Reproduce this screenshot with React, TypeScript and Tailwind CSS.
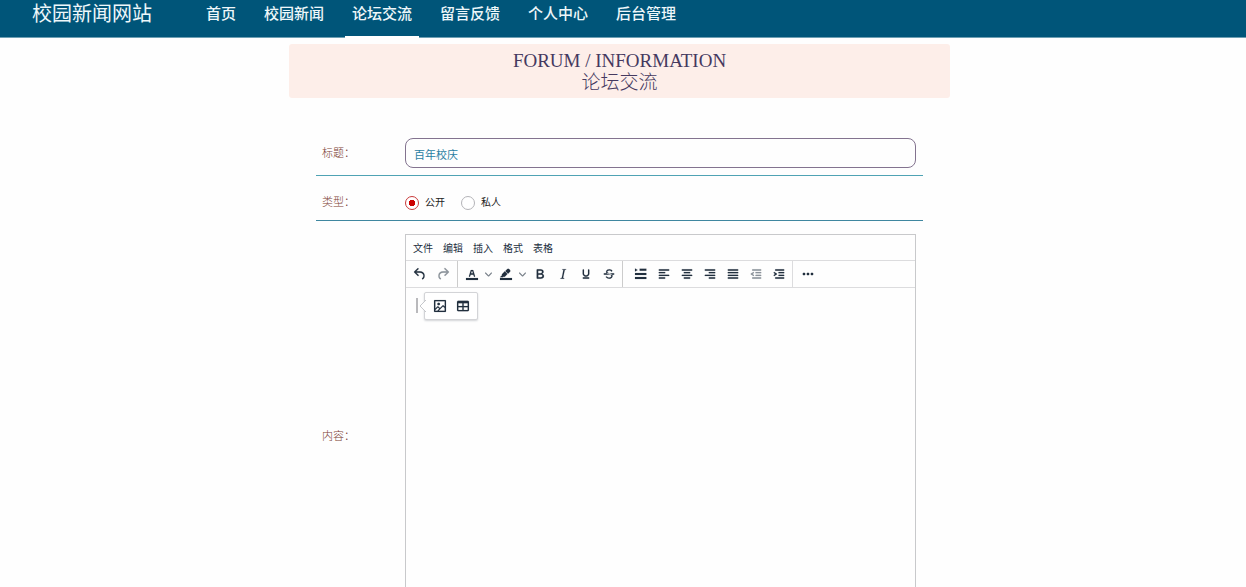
import { useState, type ReactNode } from "react";

const NAV = ["首页", "校园新闻", "论坛交流", "留言反馈", "个人中心", "后台管理"];
const MENUS = ["文件", "编辑", "插入", "格式", "表格"];

const line = (x: number, y: number, end: number) =>
  `M${x} ${y}H${end}a1 1 0 0 1 0 2H${x}a1 1 0 0 1 0-2z`;

const ICONS = {
  undo: "M6.4 8H12c3.7 0 6.2 2 6.8 5.1.6 2.7-.4 5.6-2.3 6.8a1 1 0 0 1-1-1.8c1.1-.6 1.8-2.7 1.4-4.6-.5-2.1-2.1-3.5-4.9-3.5H6.4l3.3 3.3a1 1 0 1 1-1.4 1.4l-5-5a1 1 0 0 1 0-1.4l5-5a1 1 0 0 1 1.4 1.4L6.4 8z",
  redo: "M17.6 10H12c-2.8 0-4.4 1.4-4.9 3.5-.4 2 .3 4 1.4 4.6a1 1 0 1 1-1 1.8c-2-1.2-2.9-4.1-2.3-6.8.6-3 3-5.1 6.8-5.1h5.6l-3.3-3.3a1 1 0 1 1 1.4-1.4l5 5a1 1 0 0 1 0 1.4l-5 5a1 1 0 0 1-1.4-1.4l3.3-3.3z",
  color:
    "M3 18h18v3H3zM8.7 16h-.8a.5.5 0 0 1-.5-.6l2.7-9c.1-.3.3-.4.5-.4h2.8c.2 0 .4.1.5.4l2.7 9a.5.5 0 0 1-.5.6h-.8a.5.5 0 0 1-.4-.4l-.7-2.2c0-.3-.3-.4-.5-.4h-3.4c-.2 0-.4.1-.5.4l-.7 2.2c0 .3-.2.4-.4.4zm2.6-7.6l-.6 2a.5.5 0 0 0 .5.6h1.6a.5.5 0 0 0 .5-.6l-.6-2c0-.3-.3-.4-.5-.4h-.4c-.2 0-.4.1-.5.4z",
  highlight:
    "M3 18h18v3H3zM7.7 16.7H3l3.3-3.3-.7-.8L10.2 8l4 4.1-4 4.2c-.2.2-.6.2-.8 0l-.6-.7-1.1 1.1zm5-7.5L11 7.4l3-2.9a2 2 0 0 1 2.6 0L18 6c.7.7.7 2 0 2.7l-2.9 2.9-1.8-1.8-.5-.6z",
  bold: "M7.8 19c-.3 0-.5 0-.6-.2l-.2-.5V5.7c0-.2 0-.4.2-.5l.6-.2h5c1.5 0 2.7.3 3.5 1 .7.6 1.1 1.4 1.1 2.5a3 3 0 0 1-.6 1.9c-.4.6-1 1-1.6 1.2.4.1.9.3 1.3.6s.8.7 1 1.2c.4.4.5 1 .5 1.6 0 1.3-.4 2.3-1.3 3-.8.7-2.1 1-3.8 1H7.8zm5-8.3c.6 0 1.2-.1 1.6-.5.4-.3.6-.7.6-1.3 0-1.1-.8-1.7-2.3-1.7H9.3v3.5h3.4zm.5 6c.7 0 1.3-.1 1.7-.4.4-.4.6-.9.6-1.5s-.2-1-.7-1.4c-.4-.3-1-.4-2-.4H9.4v3.8h4z",
  italic:
    "M16.7 4.7l-.1.9h-.3c-.6 0-1 0-1.4.3-.3.3-.4.6-.5 1.1l-2.1 9.8v.6c0 .5.4.8 1.4.8h.2l-.2.8H8l.2-.8h.2c1.1 0 1.8-.5 2-1.5l2-9.8.1-.5c0-.6-.4-.8-1.4-.8h-.3l.2-.9h5.8z",
  underline:
    "M16 5c.6 0 1 .4 1 1v5.5a4 4 0 0 1-.4 1.8l-1 1.4a5.3 5.3 0 0 1-5.5 1 5 5 0 0 1-1.6-1c-.5-.4-.8-.9-1.1-1.4a4 4 0 0 1-.4-1.8V6c0-.6.4-1 1-1s1 .4 1 1v5.5c0 .3 0 .6.2 1l.6.7a3.3 3.3 0 0 0 2.2.8 3.4 3.4 0 0 0 2.2-.8c.3-.2.4-.5.6-.8l.2-.9V6c0-.6.4-1 1-1zM8 17h8c.6 0 1 .4 1 1s-.4 1-1 1H8a1 1 0 0 1 0-2z",
  strike:
    "M15.6 8.5c-.5-.7-1-1.1-1.3-1.3-.6-.4-1.3-.6-2-.6-2.7 0-2.8 1.7-2.8 2.1 0 1.6 1.8 2 3.2 2.3 4.4.9 4.6 2.8 4.6 3.9 0 1.4-.7 4.1-5 4.1A6.2 6.2 0 0 1 7 16.4l1.5-1.1c.4.6 1.6 2 3.7 2 1.6 0 2.5-.4 3-1.2.4-.8.3-2-.8-2.6-.7-.4-1.6-.7-2.9-1-1-.2-3.9-.8-3.9-3.6C7.6 6 10.3 5 12.4 5c2.9 0 4.2 1.6 4.7 2.4l-1.5 1.1zM5 11h14a1 1 0 0 1 0 2H5a1 1 0 0 1 0-2z",
  firstLine: "M3 3.6l4 2.4-4 2.4zM10 4h10v3H10zM3 10.5h17v3H3zM3 16.5h17v3H3z",
  left: line(5, 5, 19) + line(5, 9, 13) + line(5, 13, 19) + line(5, 17, 13),
  center: line(5, 5, 19) + line(8, 9, 16) + line(5, 13, 19) + line(8, 17, 16),
  right: line(5, 5, 19) + line(11, 9, 19) + line(5, 13, 19) + line(11, 17, 19),
  justify: line(5, 5, 19) + line(5, 9, 19) + line(5, 13, 19) + line(5, 17, 19),
  outdent:
    line(7, 5, 19) + line(12, 9, 19) + line(12, 13, 19) + line(7, 17, 19) +
    "M8.6 13.2a1 1 0 0 1-1.2 1.6l-3-2a1 1 0 0 1 0-1.6l3-2a1 1 0 0 1 1.2 1.6L6.8 12l1.8 1.2z",
  indent:
    line(7, 5, 19) + line(12, 9, 19) + line(12, 13, 19) + line(7, 17, 19) +
    "M4.4 13.2L6.2 12l-1.8-1.2a1 1 0 0 1 1.2-1.6l3 2a1 1 0 0 1 0 1.6l-3 2a1 1 0 0 1-1.2-1.6z",
  more: "M6 10a2 2 0 1 0 0 4 2 2 0 0 0 0-4zm12 0a2 2 0 1 0 0 4 2 2 0 0 0 0-4zm-6 0a2 2 0 1 0 0 4 2 2 0 0 0 0-4z",
  image:
    "M5 15.7l3.3-3.2c.3-.3.7-.3 1 0L12 15l4.1-4c.3-.4.8-.4 1 0l2 1.9V5H5v10.7zM5 18v1h3l2.8-2.9-2-2L5 17.9zm14-3l-2.5-2.4-6.4 6.5H19v-4zM4 3h16c.6 0 1 .4 1 1v16c0 .6-.4 1-1 1H4a1 1 0 0 1-1-1V4c0-.6.4-1 1-1zm6 8a2 2 0 1 0 0-4 2 2 0 0 0 0 4z",
  table:
    "M19 4a2 2 0 0 1 2 2v12a2 2 0 0 1-2 2H5a2 2 0 0 1-2-2V6c0-1.1.9-2 2-2h14zM5 14v4h6v-4H5zm14 0h-6v4h6v-4zm0-6h-6v4h6V8zM5 12h6V8H5v4z",
};

type IconName = keyof typeof ICONS;

function Tool({ icon, label, disabled = false }: { icon: IconName; label: string; disabled?: boolean }) {
  return (
    <button
      type="button"
      aria-label={label}
      disabled={disabled}
      className="flex size-[23px] shrink-0 items-center justify-center text-[#222f3e] disabled:text-[#222f3e]/50"
    >
      <svg
        viewBox="0 0 24 24"
        className="size-4"
        fill="currentColor"
        fillRule="evenodd"
        stroke="currentColor"
        strokeWidth="0.2"
        aria-hidden="true"
      >
        <path d={ICONS[icon]} />
      </svg>
    </button>
  );
}

function Chevron({ label }: { label: string }) {
  return (
    <button type="button" aria-label={label} className="flex h-[23px] w-[11px] shrink-0 items-center justify-center text-[#222f3e]/60">
      <svg viewBox="0 0 10 10" className="size-[7px]" fill="currentColor" aria-hidden="true">
        <path d="M8.7 2.2c.3-.3.8-.3 1 0 .4.4.4.9 0 1.2L5.7 7.8c-.3.3-.9.3-1.2 0L.2 3.4a.8.8 0 0 1 0-1.2c.3-.3.8-.3 1.1 0L5 6l3.7-3.8z" />
      </svg>
    </button>
  );
}

function Row({ label, htmlFor, className, children }: { label: string; htmlFor: string; className: string; children: ReactNode }) {
  return (
    <div className={`flex items-center pr-[7px] pl-1.5 ${className}`}>
      <label id={`${htmlFor}-label`} htmlFor={htmlFor} className="w-[83px] shrink-0 text-[11px] leading-4 font-light text-[#7c4034]">
        {label}
      </label>
      <div className="min-w-0 flex-1">{children}</div>
    </div>
  );
}

function Editor() {
  return (
    <div className="h-[404px] border border-[#c8c9cb] bg-[#fefefe]">
      <div role="menubar" className="flex h-[25px] items-center pt-0.5 pl-0.5">
        {MENUS.map((m) => (
          <button key={m} type="button" role="menuitem" className="px-[5px] text-[10px] leading-4 text-[#222f3e]">
            {m}
          </button>
        ))}
      </div>
      <div role="toolbar" className="flex h-7 border-y border-[#dcdcde]">
        <div className="flex items-center border-r border-[#cccccc] pr-[3px] pl-0.5">
          <Tool icon="undo" label="撤销" />
          <Tool icon="redo" label="重做" disabled />
        </div>
        <div className="flex items-center border-r border-[#cccccc] px-0.5">
          <Tool icon="color" label="文字颜色" />
          <Chevron label="选择文字颜色" />
          <Tool icon="highlight" label="背景颜色" />
          <Chevron label="选择背景颜色" />
          <Tool icon="bold" label="粗体" />
          <Tool icon="italic" label="斜体" />
          <Tool icon="underline" label="下划线" />
          <Tool icon="strike" label="删除线" />
        </div>
        <div className="flex items-center border-r border-[#dcdcde] pr-0.5 pl-1.5">
          <Tool icon="firstLine" label="首行缩进" />
          <Tool icon="left" label="左对齐" />
          <Tool icon="center" label="居中" />
          <Tool icon="right" label="右对齐" />
          <Tool icon="justify" label="两端对齐" />
          <Tool icon="outdent" label="减少缩进" disabled />
          <Tool icon="indent" label="增加缩进" />
        </div>
        <div className="flex items-center pl-[3px]">
          <Tool icon="more" label="更多" />
        </div>
      </div>
      <div id="content" role="textbox" aria-multiline="true" aria-labelledby="content-label" tabIndex={0} className="relative px-2.5 py-2.5 outline-none">
        <div className="h-[15px] w-0.5 bg-[#b9b9bc]" />
        <div className="absolute top-1 left-[18px] flex h-7 items-center rounded-[2px] border border-[#d3d4d7] bg-white px-[3px] shadow-[0_1px_2px_rgba(34,47,62,0.2)]">
          <svg viewBox="0 0 7 12" className="absolute top-[7px] -left-1.5 h-3 w-[7px]" aria-hidden="true">
            <path d="M7 0L1 6l6 6" fill="#fff" stroke="#c6c8cc" />
          </svg>
          <Tool icon="image" label="插入图片" />
          <Tool icon="table" label="插入表格" />
        </div>
      </div>
    </div>
  );
}

export default function App() {
  const [title, setTitle] = useState("百年校庆");
  const [kind, setKind] = useState("公开");

  return (
    <div className="h-screen overflow-hidden bg-[#fefefe] font-['Liberation_Sans','Noto_Sans_CJK_SC',sans-serif]">
      <header className="flex h-[38px] items-start border-b border-[#6d9fb3] bg-[#005579] pl-8 text-[#eef7fa]">
        <a href="#" className="w-[167px] shrink-0 text-xl leading-7">校园新闻网站</a>
        <nav className="flex gap-3.5 self-stretch">
          {NAV.map((n) => (
            <a
              key={n}
              href="#"
              className={`-mb-px border-b-2 px-[7px] text-[15px] leading-7 font-medium whitespace-nowrap ${n === "论坛交流" ? "border-white" : "border-transparent"}`}
            >
              {n}
            </a>
          ))}
        </nav>
      </header>

      <div className="pt-1.5 pr-[7px]">
        <main className="mx-auto max-w-[661px]">
          <div className="rounded-[3px] bg-[#fdeee9] pt-1.5 pb-1 text-center font-['Liberation_Serif','Noto_Sans_CJK_SC',serif] leading-[22px] text-[#45395f]">
            <h1 className="text-[19px]">FORUM / INFORMATION</h1>
            <h2 className="text-[19px] font-light">论坛交流</h2>
          </div>

          <form className="px-[27px] pt-[33px]" onSubmit={(e) => e.preventDefault()}>
            <Row label="标题：" htmlFor="title" className="h-[45px] border-b border-[#4fa3b4]">
              <input
                id="title"
                type="text"
                value={title}
                onChange={(e) => setTitle(e.target.value)}
                className="block h-[30px] w-full rounded-lg border border-[#83738f] bg-transparent px-2 pt-0.5 text-[11px] text-[#2a7fa3] outline-none"
              />
            </Row>
            <Row label="类型：" htmlFor="kind-0" className="h-[45px] border-b border-[#3f87a0] pt-[7px]">
              <div className="flex gap-4 pt-0.5">
                {["公开", "私人"].map((k, i) => (
                  <label key={k} className="flex items-center gap-1.5 text-[10px] leading-4 text-[#222222]">
                    <input
                      id={`kind-${i}`}
                      type="radio"
                      name="kind"
                      checked={kind === k}
                      onChange={() => setKind(k)}
                      className="size-3.5 appearance-none rounded-full border border-[#b4b4b8] bg-white checked:border-[#c83a3a] checked:bg-[radial-gradient(circle,#cc0000_3px,transparent_3px)]"
                    />
                    {k}
                  </label>
                ))}
              </div>
            </Row>
            <Row label="内容：" htmlFor="content" className="pt-[13px]">
              <Editor />
            </Row>
          </form>
        </main>
      </div>
    </div>
  );
}
